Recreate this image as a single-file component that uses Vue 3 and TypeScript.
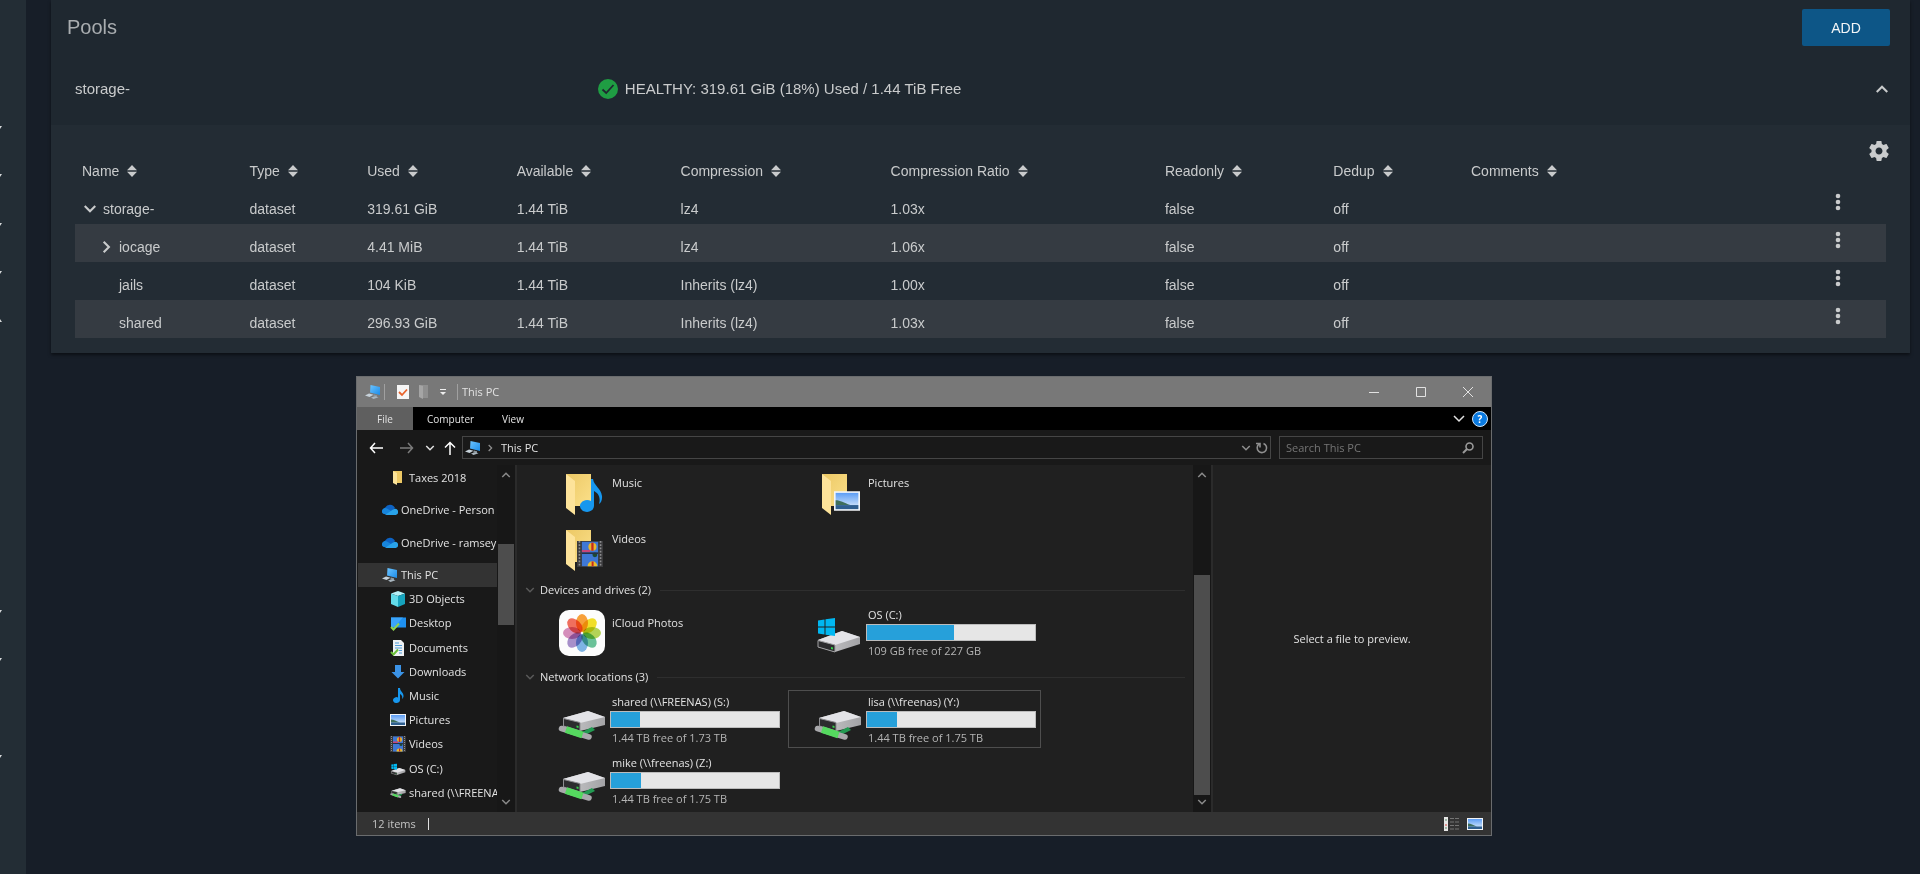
<script setup lang="ts">
interface Dataset {
  name: string
  level: number
  toggle: 'down' | 'right' | ''
  used: string
  compression: string
  ratio: string
}

interface NavItem {
  label: string
  icon: string
  depth: number
  gap?: boolean
  active?: boolean
}

interface Drive {
  label: string
  icon: string
  free: string
  used: number
  focused?: boolean
}

const menu = ['down', 'down', 'down', 'down', 'up', '', '', '', '', '', 'down', 'down', '', 'down']

const columns = ['Name', 'Type', 'Used', 'Available', 'Compression', 'Compression Ratio', 'Readonly', 'Dedup', 'Comments']

const datasets: Dataset[] = [
  { name: 'storage-', level: 0, toggle: 'down', used: '319.61 GiB', compression: 'lz4', ratio: '1.03x' },
  { name: 'iocage', level: 1, toggle: 'right', used: '4.41 MiB', compression: 'lz4', ratio: '1.06x' },
  { name: 'jails', level: 1, toggle: '', used: '104 KiB', compression: 'Inherits (lz4)', ratio: '1.00x' },
  { name: 'shared', level: 1, toggle: '', used: '296.93 GiB', compression: 'Inherits (lz4)', ratio: '1.03x' },
]

const navItems: NavItem[] = [
  { label: 'Taxes 2018', icon: 'folder-small', depth: 1, gap: true },
  { label: 'OneDrive - Person', icon: 'cloud', depth: 0, gap: true },
  { label: 'OneDrive - ramsey', icon: 'cloud', depth: 0, gap: true },
  { label: 'This PC', icon: 'pc', depth: 0, active: true },
  { label: '3D Objects', icon: 'cube', depth: 1 },
  { label: 'Desktop', icon: 'desktop', depth: 1 },
  { label: 'Documents', icon: 'document', depth: 1 },
  { label: 'Downloads', icon: 'download', depth: 1 },
  { label: 'Music', icon: 'note', depth: 1 },
  { label: 'Pictures', icon: 'picture', depth: 1 },
  { label: 'Videos', icon: 'film', depth: 1 },
  { label: 'OS (C:)', icon: 'os-drive', depth: 1 },
  { label: 'shared (\\\\FREENA', icon: 'net-drive', depth: 1 },
]

const osDrive: Drive = { label: 'OS (C:)', icon: 'os-drive', free: '109 GB free of 227 GB', used: 52 }

const networkDrives: Drive[] = [
  { label: 'shared (\\\\FREENAS) (S:)', icon: 'net-drive', free: '1.44 TB free of 1.73 TB', used: 17 },
  { label: 'lisa (\\\\freenas) (Y:)', icon: 'net-drive', free: '1.44 TB free of 1.75 TB', used: 18, focused: true },
  { label: 'mike (\\\\freenas) (Z:)', icon: 'net-drive', free: '1.44 TB free of 1.75 TB', used: 18 },
]

const petals = [
  { angle: 0, color: '#f9a13a' },
  { angle: 45, color: '#f3e02a' },
  { angle: 90, color: '#b5d558' },
  { angle: 135, color: '#6cc49a' },
  { angle: 180, color: '#7fb6e6' },
  { angle: 225, color: '#a891cc' },
  { angle: 270, color: '#d78fbd' },
  { angle: 315, color: '#f2705f' },
]
</script>

<template>
  <svg class="defs" aria-hidden="true">
    <defs>
      <linearGradient id="g-folder" x1="0" y1="0" x2="1" y2="1">
        <stop offset="0" stop-color="#ecc865" /><stop offset="1" stop-color="#fbe08a" />
      </linearGradient>
      <linearGradient id="g-screen" x1="0" y1="0" x2="1" y2="1">
        <stop offset="0" stop-color="#6cc4ff" /><stop offset="1" stop-color="#1c8ce8" />
      </linearGradient>
      <linearGradient id="g-sky" x1="0" y1="0" x2="0" y2="1">
        <stop offset="0" stop-color="#5c9df5" /><stop offset="1" stop-color="#e4f1fb" />
      </linearGradient>
      <linearGradient id="g-side" x1="0" y1="0" x2="1" y2="0">
        <stop offset="0" stop-color="#c9c9cb" /><stop offset="1" stop-color="#a3a3a6" />
      </linearGradient>
      <symbol id="chev-down" viewBox="0 0 12 12"><path d="M1.5 3.5 6 8l4.500-4.500" fill="none" stroke="currentColor" stroke-width="1.800" /></symbol>
      <symbol id="chev-up" viewBox="0 0 12 12"><path d="M1.500 8.500 6 4l4.500 4.500" fill="none" stroke="currentColor" stroke-width="1.800" /></symbol>
      <symbol id="chev-right" viewBox="0 0 12 12"><path d="M4 1.500 8.500 6 4 10.500" fill="none" stroke="currentColor" stroke-width="1.800" /></symbol>
      <symbol id="pc" viewBox="0 0 16 16">
        <path d="M5.500 1 15 3v8L5 8.500z" fill="url(#g-screen)" />
        <path d="M9 10.500l3 .8v1.700l-4-.5z" fill="#8c969c" />
        <path d="M0 11.500 4 9.500l4.500 1.200L4.500 13z" fill="#c7d2da" />
        <path d="M6 13.500l4.500-1.300 3 1-5 1.800z" fill="#aab7c0" />
      </symbol>
      <symbol id="folder-small" viewBox="0 0 16 16">
        <path d="M3 1h9v12H6z" fill="#edc965" /><path d="M3 1l4 2v12l-4-2z" fill="#fce49a" />
      </symbol>
      <symbol id="cloud" viewBox="1 2 16 13">
        <path d="M4 13a4 4 0 0 1 .2-7A5.500 5.500 0 0 1 14 6.500l-6 6z" fill="#0d63c4" />
        <path d="M1 11a3.500 3.500 0 0 1 5-4l9 5.500H4A3 3 0 0 1 1 11z" fill="#1785dc" />
        <path d="M4 13.500 12 8a4 4 0 0 1 2-.8 3.200 3.200 0 0 1 .8 6.300z" fill="#29a3ea" />
      </symbol>
      <symbol id="cube" viewBox="0 0 16 16">
        <path d="M8 0l7 2.500L8 5 1 2.500z" fill="#b6f0f7" /><path d="M1 2.500 8 5v11l-7-3z" fill="#62dbe9" /><path d="M15 2.500 8 5v11l7-3z" fill="#16a3bd" />
      </symbol>
      <symbol id="desktop" viewBox="0 0 16 16">
        <path d="M1 2.500h15v10H1z" fill="#1e90f0" /><path d="M1 2.500h12L4 12.500H1z" fill="#3ba4fa" />
        <path d="M1 12l2.500 2.500L9 8.500" fill="none" stroke="#8fd14f" stroke-width="2" />
      </symbol>
      <symbol id="document" viewBox="0 0 16 16">
        <path d="M3 0h8l3 3v13H3z" fill="#eef1f3" /><path d="M5 3h4M5 5.500h7M5 8h7M9 10.500h3M9 13h3" stroke="#4f9bd8" />
        <path d="M1 12l2.500 2.500L8 9.500" fill="none" stroke="#6bbf3a" stroke-width="2" />
      </symbol>
      <symbol id="download" viewBox="0 0 16 16"><path d="M5 1h6v7h3.500L8 14.500 1.500 8H5z" fill="#3b93e6" /></symbol>
      <symbol id="note" viewBox="0 0 16 16">
        <path d="M8 0h2c0 3.500 4 4.500 3.500 8.500-.2 1.200-.7 1.900-1.300 2.500.6-3-.7-4.300-2.200-5V12a3.500 3 0 1 1-2-2.600z" fill="#1797ee" />
      </symbol>
      <symbol id="picture" viewBox="0 0 16 12">
        <path d="M0 0h16v12H0z" fill="#f2f5f7" /><path d="M1 1h14v10H1z" fill="url(#g-sky)" />
        <path d="M1 5.500c3 0 5 1.500 9 3H1z" fill="#3f6f5c" /><path d="M1 8.500h14V11H1z" fill="#2f5f8f" />
      </symbol>
      <symbol id="film" viewBox="0 0 16 16">
        <path d="M0 0h16v16H0z" fill="#3a3a3c" /><path d="M3 .500h10v15H3z" fill="#3f78d6" />
        <path d="M1.500 0v16M14.500 0v16" stroke="#8e8e90" stroke-dasharray="1 1" />
        <circle cx="9.500" cy="3.500" r="2.500" fill="#e9b62c" /><path d="M8.800 1h1.400v5H8.800z" fill="#c6281e" />
        <path d="M3 5.500h5v1.500H3z" fill="#c8457a" /><circle cx="11" cy="8.500" r="1.500" fill="#1d4a35" />
        <path d="M3 7.500h10" stroke="#24324a" /><path d="M6.500 15.500a3 3 0 0 1 6 0z" fill="#eabc2c" /><path d="M9 12.600h1.200v3H9z" fill="#c6281e" />
      </symbol>
      <symbol id="net-drive" viewBox="0 0 48 32">
        <path d="M5 9 30 2l17 6v8L22 22 5 17z" fill="url(#g-side)" /><path d="M5 9 30 2l17 6-25 6z" fill="#e3e3e7" />
        <path d="M22 24l12-6 3 3-12 6z" fill="#239a52" />
        <path d="M5.500 9.500 22 13.500v8.500L5.500 17z" fill="#2c2c2e" stroke="#8d8d90" /><path d="M18.500 16.500l2 .5v2l-2-.5z" fill="#34d14a" />
        <path d="M3.500 19.500 31 28" stroke="#a9a9ac" stroke-width="5.500" stroke-linecap="round" />
        <path d="M8 20.500 24.500 26" stroke="#55d95f" stroke-width="7" />
      </symbol>
      <symbol id="os-drive" viewBox="0 0 48 40">
        <path d="M4 26 28 17l18 6v7L21 38 4 33z" fill="url(#g-side)" /><path d="M4 26 28 17l18 6-25 8z" fill="#e3e3e7" />
        <path d="M4 26.500l17 4.500v7L4 33z" fill="#2c2c2e" stroke="#a0a0a2" /><path d="M17 33l2 .5v2l-2-.5z" fill="#34d14a" />
        <path d="M4 6.500 10.500 5.500v7H4zM11.500 5.300 21 4v8.500h-9.500zM4 13.500h6.500v7L4 19.500zM11.500 13.500H21V22l-9.500-1.300z" fill="#00b7f1" />
      </symbol>
      <symbol id="folder-large" viewBox="0 0 36 42">
        <path d="M1 1h25v32H8z" fill="url(#g-folder)" /><path d="M1 1l9 7v34L1 35z" fill="#fde39a" />
      </symbol>
    </defs>
  </svg>

  <div class="page">
    <ul class="menu">
      <li v-for="(dir, i) in menu" :key="i">
        <svg v-if="dir" width="2" height="3" viewBox="0 0 2 3">
          <path :d="dir === 'down' ? 'M0 0h2L0 3z' : 'M0 0l2 3H0z'" fill="#d5d8da" />
        </svg>
      </li>
    </ul>

    <main class="main">
      <section class="card">
        <header class="card-head">
          <h1>Pools</h1>
          <button class="add" type="button">ADD</button>
        </header>
        <div class="pool">
          <span>storage-</span>
          <span class="health">
            <svg width="20" height="20" viewBox="0 0 20 20">
              <circle cx="10" cy="10" r="10" fill="#1f9d43" />
              <path d="M4.500 10.500 8.200 14l7.300-8" fill="none" stroke="#1f2830" stroke-width="1.800" />
            </svg>
            HEALTHY: 319.61 GiB (18%) Used / 1.44 TiB Free
          </span>
          <button class="plain" type="button" aria-label="Collapse pool">
            <svg width="14" height="14"><use href="#chev-up" /></svg>
          </button>
        </div>

        <div class="panel">
          <div class="tools">
            <button class="plain" type="button" aria-label="Pool settings">
              <svg width="24" height="24" viewBox="0 0 24 24">
                <path fill="currentColor" d="M19.430 12.980c.04-.32.07-.64.07-.98s-.03-.66-.07-.98l2.110-1.650c.19-.15.24-.42.12-.64l-2-3.460c-.12-.22-.39-.3-.61-.22l-2.490 1c-.52-.4-1.080-.73-1.690-.98l-.38-2.650C14.460 2.180 14.250 2 14 2h-4c-.25 0-.46.18-.49.42l-.38 2.650c-.61.25-1.170.59-1.690.98l-2.490-1c-.23-.09-.49 0-.61.22l-2 3.460c-.13.22-.07.49.12.64l2.110 1.650c-.04.32-.07.65-.07.98s.03.66.07.98l-2.110 1.650c-.19.15-.24.42-.12.64l2 3.460c.12.22.39.3.61.22l2.490-1c.52.4 1.080.73 1.690.98l.38 2.650c.03.24.24.42.49.42h4c.25 0 .46-.18.49-.42l.38-2.650c.61-.25 1.170-.59 1.690-.98l2.490 1c.23.09.49 0 .61-.22l2-3.460c.12-.22.07-.49-.12-.64l-2.110-1.650zM12 15.500c-1.930 0-3.500-1.570-3.500-3.500s1.570-3.500 3.500-3.500 3.500 1.570 3.500 3.500-1.570 3.500-3.500 3.500z" />
              </svg>
            </button>
          </div>
          <table class="datasets">
            <colgroup>
              <col class="c-name" /><col class="c-type" /><col class="c-used" /><col class="c-avail" /><col class="c-comp" />
              <col class="c-ratio" /><col class="c-read" /><col class="c-dedup" /><col class="c-comments" /><col />
            </colgroup>
            <thead>
              <tr>
                <th v-for="c in columns" :key="c" scope="col">
                  <button class="plain sort" type="button">
                    {{ c }}
                    <svg width="10" height="12" viewBox="0 0 10 12"><path d="M0 5.300 5 0l5 5.300zM0 6.700h10L5 12z" fill="currentColor" /></svg>
                  </button>
                </th>
                <th></th>
              </tr>
            </thead>
            <tbody>
              <tr v-for="d in datasets" :key="d.name">
                <td>
                  <span class="tree" :class="{ child: d.level }">
                    <svg width="16" height="16"><use v-if="d.toggle" :href="'#chev-' + d.toggle" x="1" y="1" width="14" height="14" /></svg>
                    {{ d.name }}
                  </span>
                </td>
                <td>dataset</td>
                <td>{{ d.used }}</td>
                <td>1.44 TiB</td>
                <td>{{ d.compression }}</td>
                <td>{{ d.ratio }}</td>
                <td>false</td>
                <td>off</td>
                <td></td>
                <td class="actions">
                  <button class="plain" type="button" :aria-label="'Options for ' + d.name">
                    <svg width="24" height="24" viewBox="0 0 24 24" fill="currentColor"><circle cx="12" cy="6" r="2.300" /><circle cx="12" cy="12" r="2.300" /><circle cx="12" cy="18" r="2.300" /></svg>
                  </button>
                </td>
              </tr>
            </tbody>
          </table>
        </div>
      </section>

      <section class="window">
        <header class="titlebar">
          <svg width="16" height="16"><use href="#pc" /></svg>
          <i class="sep"></i>
          <svg class="props" width="12" height="16" viewBox="0 0 12 16"><path d="M0 1h12v14H0z" fill="#f6f6f6" /><path d="M2 8l3 3 5-5.500" fill="none" stroke="#e8632c" stroke-width="1.800" /></svg>
          <svg width="11" height="16" viewBox="0 0 11 16"><path d="M1 1h9v13H4z" fill="#8f8f8f" /><path d="M1 1l4 1v13l-4-2z" fill="#a5a5a5" /></svg>
          <svg class="quick" width="8" height="8" viewBox="0 0 8 8"><path d="M1 1.500h6" stroke="#eee" /><path d="M1 4h6L4 7z" fill="#eee" /></svg>
          <i class="sep"></i>
          <span class="title">This PC</span>
          <button class="plain" type="button" aria-label="Minimize"><svg width="12" height="12" viewBox="0 0 12 12"><path d="M1 6.500h10" stroke="currentColor" /></svg></button>
          <button class="plain" type="button" aria-label="Maximize"><svg width="12" height="12" viewBox="0 0 12 12"><path d="M1.500 1.500h9v9h-9z" fill="none" stroke="currentColor" /></svg></button>
          <button class="plain" type="button" aria-label="Close"><svg width="12" height="12" viewBox="0 0 12 12"><path d="M1 1l10 10M11 1 1 11" stroke="currentColor" /></svg></button>
        </header>

        <nav class="tabs">
          <button class="plain file" type="button">File</button>
          <button class="plain" type="button">Computer</button>
          <button class="plain" type="button">View</button>
          <span class="fill"></span>
          <button class="plain expand" type="button" aria-label="Expand ribbon">
            <svg width="14" height="14" viewBox="0 0 14 14"><path d="M2 4l5 5 5-5" fill="none" stroke="currentColor" stroke-width="1.500" /></svg>
          </button>
          <button class="help" type="button" aria-label="Help">?</button>
        </nav>

        <div class="toolbar">
          <button class="plain" type="button" aria-label="Back"><svg width="14" height="14" viewBox="0 0 14 14"><path d="M14 7H1.500M6 2 1.500 7 6 12" fill="none" stroke="#fff" stroke-width="1.500" /></svg></button>
          <button class="plain" type="button" aria-label="Forward"><svg width="14" height="14" viewBox="0 0 14 14"><path d="M0 7h12.500M8 2l4.500 5L8 12" fill="none" stroke="#7c7c7c" stroke-width="1.500" /></svg></button>
          <button class="plain recent" type="button" aria-label="Recent locations"><svg width="10" height="10"><use href="#chev-down" /></svg></button>
          <button class="plain" type="button" aria-label="Up"><svg width="12" height="14" viewBox="0 0 12 14"><path d="M6 14V1.500M1 6.500l5-5 5 5" fill="none" stroke="#fff" stroke-width="1.500" /></svg></button>
          <div class="address">
            <svg width="16" height="16"><use href="#pc" /></svg>
            <svg class="dim" width="8" height="8"><use href="#chev-right" /></svg>
            <span>This PC</span>
            <span class="fill"></span>
            <button class="plain dim" type="button" aria-label="Previous locations"><svg width="10" height="10"><use href="#chev-down" /></svg></button>
            <button class="plain dim" type="button" aria-label="Refresh">
              <svg width="12" height="12" viewBox="0 0 12 12"><path d="M7.500 1.500A4.700 4.700 0 1 1 3 2.200M0 1.500h4v4" fill="none" stroke="currentColor" stroke-width="1.600" /></svg>
            </button>
          </div>
          <label class="search">
            <input type="text" placeholder="Search This PC" aria-label="Search This PC" />
            <svg width="12" height="12" viewBox="0 0 12 12"><circle cx="7.500" cy="4.500" r="3.500" fill="none" stroke="currentColor" stroke-width="1.600" /><path d="M5 7 1 11" stroke="currentColor" stroke-width="2" /></svg>
          </label>
        </div>

        <div class="body">
          <div class="nav">
            <ul>
              <li v-for="n in navItems" :key="n.label" :class="{ gap: n.gap, active: n.active, deep: n.depth }">
                <svg width="16" height="16"><use :href="'#' + n.icon" /></svg>
                <a href="#">{{ n.label }}</a>
              </li>
            </ul>
            <div class="scroll nav-scroll">
              <svg width="10" height="10"><use href="#chev-up" /></svg>
              <i class="track"><i class="thumb"></i></i>
              <svg width="10" height="10"><use href="#chev-down" /></svg>
            </div>
          </div>

          <div class="files">
            <div class="grid folders">
              <div class="tile">
                <svg width="40" height="42" viewBox="0 0 40 42"><use href="#folder-large" width="36" height="42" /><path d="M26 6h2c1 7 8 9 9 17 .4 4-1 7-3 8 2-7-1-11-5-13v15a7 6 0 1 1-3-5z" fill="#1797ee" /></svg>
                <span>Music</span>
              </div>
              <div class="tile">
                <svg width="40" height="42" viewBox="0 0 40 42"><use href="#folder-large" width="36" height="42" /><use href="#picture" x="13" y="18" width="26" height="20" /></svg>
                <span>Pictures</span>
              </div>
              <div class="tile">
                <svg width="40" height="42" viewBox="0 0 40 42"><use href="#folder-large" width="36" height="42" /><use href="#film" x="12" y="12" width="26" height="26" /></svg>
                <span>Videos</span>
              </div>
            </div>

            <h2><svg width="10" height="10"><use href="#chev-down" /></svg>Devices and drives (2)</h2>
            <div class="grid">
              <div class="tile photo">
                <svg width="46" height="46" viewBox="0 0 46 46">
                  <rect width="46" height="46" rx="10" fill="#fdfdfd" />
                  <g class="petals"><ellipse v-for="p in petals" :key="p.angle" cx="23" cy="13" rx="6" ry="9" :fill="p.color" :transform="`rotate(${p.angle} 23 23)`" /></g>
                </svg>
                <span>iCloud Photos</span>
              </div>
              <div class="tile drive">
                <svg width="48" height="40"><use :href="'#' + osDrive.icon" /></svg>
                <div class="info">
                  <span>{{ osDrive.label }}</span>
                  <div class="bar"><i :style="{ width: osDrive.used + '%' }"></i></div>
                  <span class="free">{{ osDrive.free }}</span>
                </div>
              </div>
            </div>

            <h2 class="second"><svg width="10" height="10"><use href="#chev-down" /></svg>Network locations (3)</h2>
            <div class="grid">
              <div v-for="d in networkDrives" :key="d.label" class="tile drive" :class="{ focused: d.focused }">
                <svg width="48" height="32"><use :href="'#' + d.icon" /></svg>
                <div class="info">
                  <span>{{ d.label }}</span>
                  <div class="bar"><i :style="{ width: d.used + '%' }"></i></div>
                  <span class="free">{{ d.free }}</span>
                </div>
              </div>
            </div>
          </div>

          <div class="scroll files-scroll">
            <svg width="10" height="10"><use href="#chev-up" /></svg>
            <i class="track"><i class="thumb"></i></i>
            <svg width="10" height="10"><use href="#chev-down" /></svg>
          </div>
          <aside class="preview">Select a file to preview.</aside>
        </div>

        <footer class="status">
          <span>12 items</span>
          <i class="caret"></i>
          <span class="fill"></span>
          <button class="plain" type="button" aria-label="Details view">
            <svg width="16" height="16" viewBox="0 0 16 16"><path d="M0 1h4v14H0z" fill="#e6e6e6" /><path d="M2 3v2M2 11v2" stroke="#5a8f6a" /><path d="M2 8v2" stroke="#d0453c" /><path d="M6 2.500h9M6 6h9M6 9.500h9M6 13h9" stroke="#747474" stroke-dasharray="4 1" /></svg>
          </button>
          <button class="plain" type="button" aria-label="Large icons view"><svg width="16" height="12"><use href="#picture" /></svg></button>
        </footer>
      </section>
    </main>
  </div>
</template>

<style>
html,
body {
  background: #171e28;
}
</style>

<style scoped>
* {
  box-sizing: border-box;
}
.defs {
  position: absolute;
  width: 0;
  height: 0;
}
svg {
  display: block;
  flex: none;
}
.plain {
  border: 0;
  padding: 0;
  background: none;
  color: inherit;
  font: inherit;
}
.fill {
  flex: 1;
}
.page {
  display: flex;
  min-height: 100vh;
  background: #171e28;
  color: #c9cbcc;
  font-family: "Liberation Sans", Arial, sans-serif;
  font-size: 14px;
}
.menu {
  display: flex;
  flex-direction: column;
  width: 26px;
  margin: 0;
  padding: 103px 0 93px;
  list-style: none;
  background: #232d35;
}
.menu li {
  display: flex;
  flex: 1;
  align-items: center;
}
.main {
  flex: 1;
  min-width: 0;
}
.card {
  margin: 0 10px 0 25px;
  background: #232c34;
  box-shadow: 0 2px 3px rgba(0, 0, 0, 0.5);
}
.card-head {
  display: flex;
  align-items: center;
  justify-content: space-between;
  padding: 9px 20px 13px 16px;
  background: #1f2830;
}
h1 {
  margin: 0;
  color: #a9adb0;
  font-size: 20px;
  font-weight: 400;
}
.add {
  width: 88px;
  height: 37px;
  border: 0;
  border-radius: 2px;
  background: #0d5687;
  color: #f2f5f7;
  font: 500 14px "Liberation Sans", Arial, sans-serif;
}
.pool {
  display: grid;
  grid-template-columns: 522fr 1275fr auto;
  align-items: center;
  height: 66px;
  padding: 0 21px 7px 24px;
  background: #1f2830;
  font-size: 15px;
}
.health {
  display: flex;
  align-items: center;
  gap: 7px;
}
.panel {
  padding: 14px 24px 15px;
}
.tools {
  display: flex;
  justify-content: flex-end;
  margin-right: -5px;
}
.datasets {
  width: 100%;
  margin-top: -7px;
  border-collapse: collapse;
  table-layout: fixed;
}
.c-name { width: 9.25%; }
.c-type { width: 6.5%; }
.c-used { width: 8.25%; }
.c-avail { width: 9.05%; }
.c-comp { width: 11.6%; }
.c-ratio { width: 15.15%; }
.c-read { width: 9.3%; }
.c-dedup { width: 7.6%; }
.c-comments { width: 9.2%; }
th {
  height: 30px;
  padding: 0 0 0 7px;
  font-weight: 400;
  text-align: left;
}
.sort {
  display: flex;
  align-items: center;
  gap: 8px;
}
td {
  height: 38px;
  padding: 8px 0 0 7px;
}
tbody tr:nth-child(even) {
  background: #353b42;
}
.tree {
  display: flex;
  align-items: center;
  gap: 5px;
}
.tree.child {
  padding-left: 16px;
}
td.actions {
  padding: 4px 36px 0 0;
  vertical-align: top;
}
.actions .plain {
  display: block;
  margin-left: auto;
}

.window {
  margin: 23px 428px 0 330px;
  border: 1px solid #6a6c6e;
  background: #202020;
  color: #e2e2e2;
  font: 11px/16px "Open Sans", "Noto Sans", sans-serif;
}
.titlebar {
  display: flex;
  align-items: center;
  height: 30px;
  padding: 0 17px 0 8px;
  background: #787878;
}
.sep {
  width: 1px;
  height: 16px;
  margin-left: 3px;
  background: #a0a0a0;
}
.props {
  margin: 0 9px 0 12px;
}
.quick {
  margin: 0 7px 0 10px;
}
.title {
  flex: 1;
  margin-left: 4px;
}
.titlebar .plain {
  margin-left: 35px;
}
.tabs {
  display: flex;
  align-items: center;
  height: 23px;
  padding-right: 3px;
  background: #000;
  font-size: 10px;
}
.tabs .plain {
  height: 23px;
  padding: 0 14px;
}
.tabs .file {
  width: 56px;
  background: #5f5f5f;
}
.tabs .expand {
  padding: 0 6px 0 0;
}
.help {
  width: 16px;
  height: 16px;
  padding: 0;
  border: 1px solid #cfe4f7;
  border-radius: 50%;
  background: #0a7ae0;
  color: #fff;
  font: 700 10px/14px "Open Sans", sans-serif;
}
.toolbar {
  display: flex;
  align-items: center;
  gap: 8px;
  height: 35px;
  padding: 0 8px 0 12px;
  background: #191919;
}
.toolbar > .plain:nth-child(2) {
  margin-left: 9px;
}
.recent {
  margin: 0 1px 0 3px;
}
.address {
  display: flex;
  flex: 1;
  align-items: center;
  gap: 5px;
  height: 23px;
  margin-left: -2px;
  padding: 0 2px;
  border: 1px solid #454545;
}
.address span:first-of-type {
  margin-left: 2px;
}
.dim {
  color: #8f8f8f;
}
.search {
  display: flex;
  align-items: center;
  width: 204px;
  height: 23px;
  padding: 0 8px 0 6px;
  border: 1px solid #454545;
  color: #9a9a9a;
}
.search input {
  flex: 1;
  min-width: 0;
  padding: 0;
  border: 0;
  outline: 0;
  background: none;
  color: inherit;
  font: inherit;
}
.search input::placeholder {
  color: #757575;
}
.body {
  display: flex;
}
.nav {
  display: flex;
  width: 160px;
  border-right: 2px solid #2b2b2b;
  background: #191919;
}
.nav ul {
  display: flex;
  flex: 1;
  flex-direction: column;
  min-width: 0;
  margin: 0;
  padding: 1px 0 7px 1px;
  list-style: none;
}
.nav li {
  display: flex;
  flex: 1;
  align-items: center;
  gap: 3px;
  padding-left: 24px;
  white-space: nowrap;
}
.nav li.deep {
  padding-left: 32px;
}
.nav li.gap {
  margin-bottom: 8px;
}
.nav li.active {
  background: #333;
}
.nav a {
  color: inherit;
  text-decoration: none;
}
.scroll {
  display: flex;
  flex-direction: column;
  align-items: center;
  width: 18px;
  padding: 5px 0;
  background: #171717;
  color: #8a8a8a;
}
.track {
  display: flex;
  flex: 1;
  flex-direction: column;
  width: 16px;
  margin: 2px 0;
}
.thumb {
  background: #4d4d4d;
}
.nav-scroll .thumb {
  height: 81px;
  margin-top: 62px;
}
.files-scroll .thumb {
  flex: 1;
  margin-top: 93px;
}
.files {
  flex: 1;
  padding: 0 0 3px 15px;
}
.grid {
  display: grid;
  grid-template-columns: repeat(2, 253px);
  gap: 3px;
}
.folders {
  row-gap: 0;
}
.tile {
  display: flex;
  gap: 7px;
  height: 58px;
  padding: 3px 4px 0 25px;
  border: 1px solid transparent;
}
.folders .tile {
  height: 56px;
  padding: 7px 0 0 32px;
}
.photo {
  gap: 7px;
  padding-left: 26px;
}
.folders .tile > span {
  margin-top: 2px;
}
.photo svg {
  margin-top: 3px;
}
.photo span {
  margin-top: 8px;
}
.petals ellipse {
  mix-blend-mode: multiply;
}
.drive {
  gap: 4px;
}
.drive > svg {
  align-self: flex-end;
  margin-bottom: 6px;
}
.focused {
  border-color: #4e4e4e;
}
.info {
  flex: 1;
  min-width: 0;
}
.info > span {
  display: block;
  height: 16px;
  margin-left: 2px;
}
.info .free {
  margin-top: 2px;
  color: #b4b4b4;
}
.bar {
  display: flex;
  height: 17px;
  margin-top: 1px;
  border: 1px solid #bcbcbc;
  background: #e6e6e6;
}
.bar i {
  background: #26a0da;
}
h2 {
  display: flex;
  align-items: center;
  gap: 5px;
  height: 26px;
  margin: 0 8px 0 -7px;
  font-size: 11px;
  font-weight: 400;
}
h2.second {
  margin-top: 3px;
}
h2 svg {
  color: #5a5a5a;
}
h2::after {
  flex: 1;
  height: 1px;
  margin-left: 4px;
  background: #2e2e2e;
  content: "";
}
.preview {
  display: flex;
  align-items: center;
  justify-content: center;
  width: 280px;
  border-left: 2px solid #2b2b2b;
}
.status {
  display: flex;
  align-items: center;
  height: 23px;
  padding: 0 8px 0 15px;
  background: #333;
  color: #c4c4c4;
}
.caret {
  width: 1px;
  height: 12px;
  margin-left: 12px;
  background: #e0e0e0;
}
.status .plain {
  margin-left: 7px;
}
</style>
